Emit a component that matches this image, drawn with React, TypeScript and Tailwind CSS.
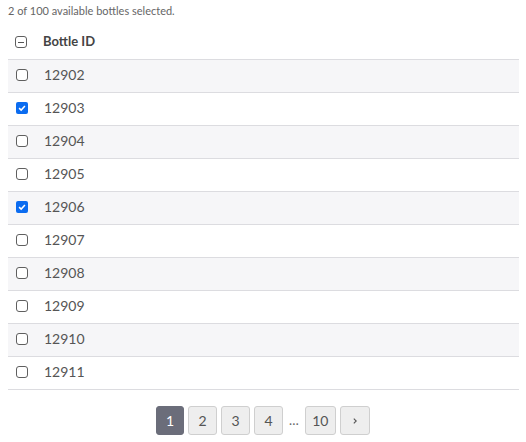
import React from "react";

const ids = [12902, 12903, 12904, 12905, 12906, 12907, 12908, 12909, 12910, 12911];
const selected = new Set([12903, 12906]);

function Box({ state }: { state: "on" | "off" | "mixed" }) {
  if (state === "on") {
    return (
      <span className="flex h-[12px] w-[12px] items-center justify-center rounded-[2px] bg-[#0b6cf0]">
        <svg viewBox="0 0 12 12" className="h-[10px] w-[10px]">
          <path d="M2.5 6.2 L5 8.5 L9.5 3.5" fill="none" stroke="white" strokeWidth="1.8" />
        </svg>
      </span>
    );
  }
  return (
    <span className="flex h-[12px] w-[12px] items-center justify-center rounded-[3px] border border-[#5f5f5f] bg-white">
      {state === "mixed" && <span className="h-[1px] w-[6px] bg-[#555]" />}
    </span>
  );
}

export default function App() {
  return (
    <div className="px-2 text-[#555] [font-family:Lato,'Noto_Sans',sans-serif]">
      <div className="pt-[3px] text-[11px] leading-[16px] text-[#666]">
        2 of 100 available bottles selected.
      </div>
      <div className="mt-[8px] w-[511px]">
        <div className="flex h-[33px] items-center border-b border-[#dcdce0] pb-[2px] pl-[7px]">
          <Box state="mixed" />
          <span className="ml-[16px] text-[13px] font-bold text-[#444]">Bottle ID</span>
        </div>
        {ids.map((id, i) => (
          <div
            key={id}
            className={`flex h-[33px] items-center border-b border-[#dcdce0] pb-[3px] pl-[8px] ${
              i % 2 === 0 ? "bg-[#f6f6f8]" : "bg-white"
            }`}
          >
            <Box state={selected.has(id) ? "on" : "off"} />
            <span className="ml-[16px] text-[14px]">{id}</span>
          </div>
        ))}
      </div>
      <div className="mt-[16px] flex items-center justify-center gap-[4px]">
        <button className="h-[29px] w-[28px] rounded-[3px] border border-[#6b6d7a] bg-[#6b6d7a] text-[14px] text-white">
          1
        </button>
        {["2", "3", "4"].map((p) => (
          <button
            key={p}
            className="h-[29px] w-[29px] rounded-[3px] border border-[#cfcfcf] bg-[#eeeeee] text-[14px] text-[#555]"
          >
            {p}
          </button>
        ))}
        <span className="px-[2px] text-[13px] text-[#666]">…</span>
        <button className="h-[29px] w-[31px] rounded-[3px] border border-[#cfcfcf] bg-[#eeeeee] text-[14px] text-[#555]">
          10
        </button>
        <button className="flex h-[29px] w-[30px] items-center justify-center rounded-[3px] border border-[#cfcfcf] bg-[#eeeeee] text-[#555]">
          <svg viewBox="0 0 10 10" className="h-[8px] w-[8px]">
            <path d="M3.5 2 L6.5 5 L3.5 8" fill="none" stroke="#555" strokeWidth="1.4" />
          </svg>
        </button>
      </div>
    </div>
  );
}
